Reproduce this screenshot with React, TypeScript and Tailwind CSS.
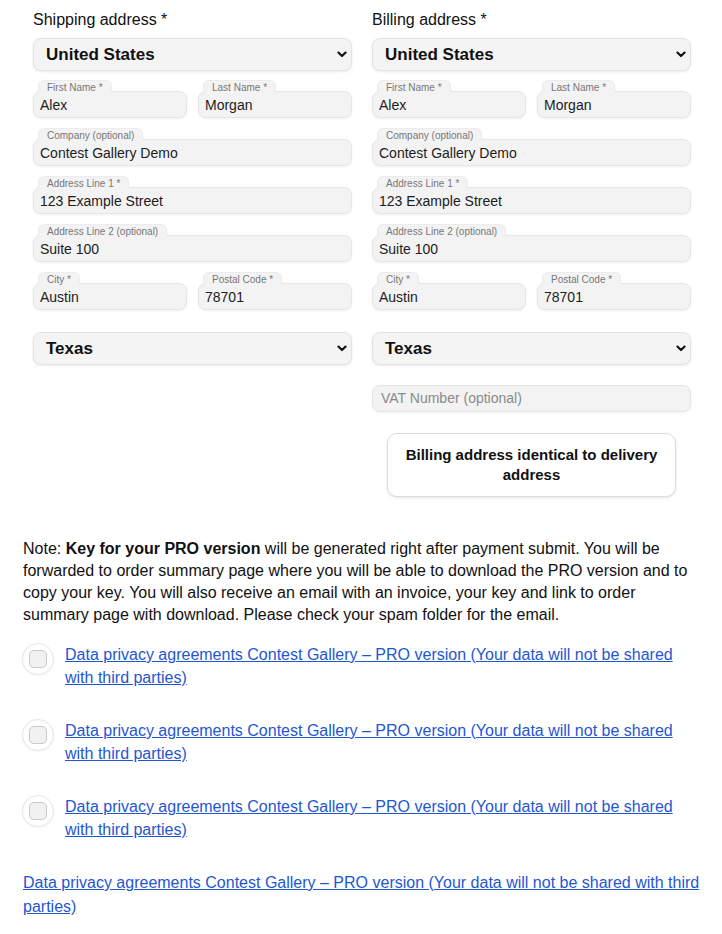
import React from 'react';

const Chevron = () => (
  <svg width="10" height="7" viewBox="0 0 10 7" className="shrink-0">
    <path d="M1.4 1.5 L5 5.1 L8.6 1.5" fill="none" stroke="#111" strokeWidth="2.1" strokeLinecap="round" strokeLinejoin="round" />
  </svg>
);

const SelectBox = ({ value }: { value: string }) => (
  <div className="flex h-[33px] items-center justify-between rounded-lg border border-[#e3e3e3] bg-[#f4f4f4] pl-[12px] pr-[4px] shadow-[0_1px_3px_rgba(0,0,0,0.08)]">
    <span className="text-[17px] font-bold text-[#111]">{value}</span>
    <Chevron />
  </div>
);

const Field = ({ label, value }: { label: string; value: string }) => (
  <div className="flex flex-col">
    <div className="relative z-10 ml-[5px] h-[12px] mb-[-1px] self-start rounded-t-md border-x border-t border-[#ececec] bg-[#f3f3f3] px-[8px] pt-[1px] text-[10px] leading-[11px] text-[#777]">
      {label}
    </div>
    <div className="flex h-[27px] items-center rounded-lg border border-[#e6e6e6] bg-[#f3f3f3] px-[6px] pt-[1px] text-[14px] text-[#1c1c1c] shadow-[0_1px_3px_rgba(0,0,0,0.06)]">
      {value}
    </div>
  </div>
);

const AddressColumn = ({ title, children }: { title: string; children?: React.ReactNode }) => (
  <div className="flex flex-col">
    <div className="h-[19px] text-[16px] leading-[19px] text-[#111]">{title}</div>
    <div className="mt-[9px]">
      <SelectBox value="United States" />
    </div>
    <div className="mt-[9px] flex flex-col gap-[10px]">
      <div className="grid grid-cols-2 gap-[11px]">
        <Field label="First Name *" value="Alex" />
        <Field label="Last Name *" value="Morgan" />
      </div>
      <Field label="Company (optional)" value="Contest Gallery Demo" />
      <Field label="Address Line 1 *" value="123 Example Street" />
      <Field label="Address Line 2 (optional)" value="Suite 100" />
      <div className="grid grid-cols-2 gap-[11px]">
        <Field label="City *" value="Austin" />
        <Field label="Postal Code *" value="78701" />
      </div>
    </div>
    <div className="mt-[21px] pt-[1px]">
      <SelectBox value="Texas" />
    </div>
    {children}
  </div>
);

const privacyText =
  'Data privacy agreements Contest Gallery – PRO version (Your data will not be shared with third parties)';

const CheckRow = () => (
  <div className="flex items-start">
    <div className="ml-[-1px] flex h-[32px] w-[32px] shrink-0 items-center justify-center rounded-full border border-[#e4e6ea] bg-white shadow-[0_1px_2px_rgba(0,0,0,0.05)]">
      <div className="h-[18px] w-[18px] rounded-[5px] border border-[#c9c9c9] bg-[#f1f1f1]" />
    </div>
    <a href="#" className="ml-[11px] text-[16px] leading-[23px] text-[#1f56d3] underline">
      {privacyText}
    </a>
  </div>
);

export default function App() {
  return (
    <div className="bg-white px-[23px] pt-[10px] pb-[20px] font-['Liberation_Sans',Arial,sans-serif] text-[#111]">
      <div className="grid grid-cols-2 gap-[20px] pl-[10px] pr-[8px]">
        <AddressColumn title="Shipping address *" />
        <AddressColumn title="Billing address *">
          <div className="mt-[20px] flex h-[27px] items-center rounded-lg border border-[#e6e6e6] bg-[#f3f3f3] px-[8px] text-[14px] text-[#8a8a8a] shadow-[0_1px_3px_rgba(0,0,0,0.06)]">
            VAT Number (optional)
          </div>
          <div className="mt-[21px] flex justify-center">
            <button className="flex h-[64px] w-[289px] items-center justify-center rounded-[10px] border border-[#dcdcdc] bg-white px-[14px] text-[15px] font-bold leading-[20px] text-[#111] shadow-[0_1px_3px_rgba(0,0,0,0.1)]">
              Billing address identical to delivery address
            </button>
          </div>
        </AddressColumn>
      </div>

      <p className="mt-[41px] text-[16px] leading-[22px] text-[#111]">
        Note: <b>Key for your PRO version</b> will be generated right after payment submit. You will be forwarded to
        order summary page where you will be able to download the PRO version and to copy your key. You will also
        receive an email with an invoice, your key and link to order summary page with download. Please check your spam
        folder for the email.
      </p>

      <div className="mt-[17px] flex flex-col gap-[30px]">
        <CheckRow />
        <CheckRow />
        <CheckRow />
        <div className="mr-[-20px]">
          <a href="#" className="text-[16px] leading-[23px] text-[#1f56d3] underline">
            {privacyText}
          </a>
        </div>
      </div>
    </div>
  );
}
